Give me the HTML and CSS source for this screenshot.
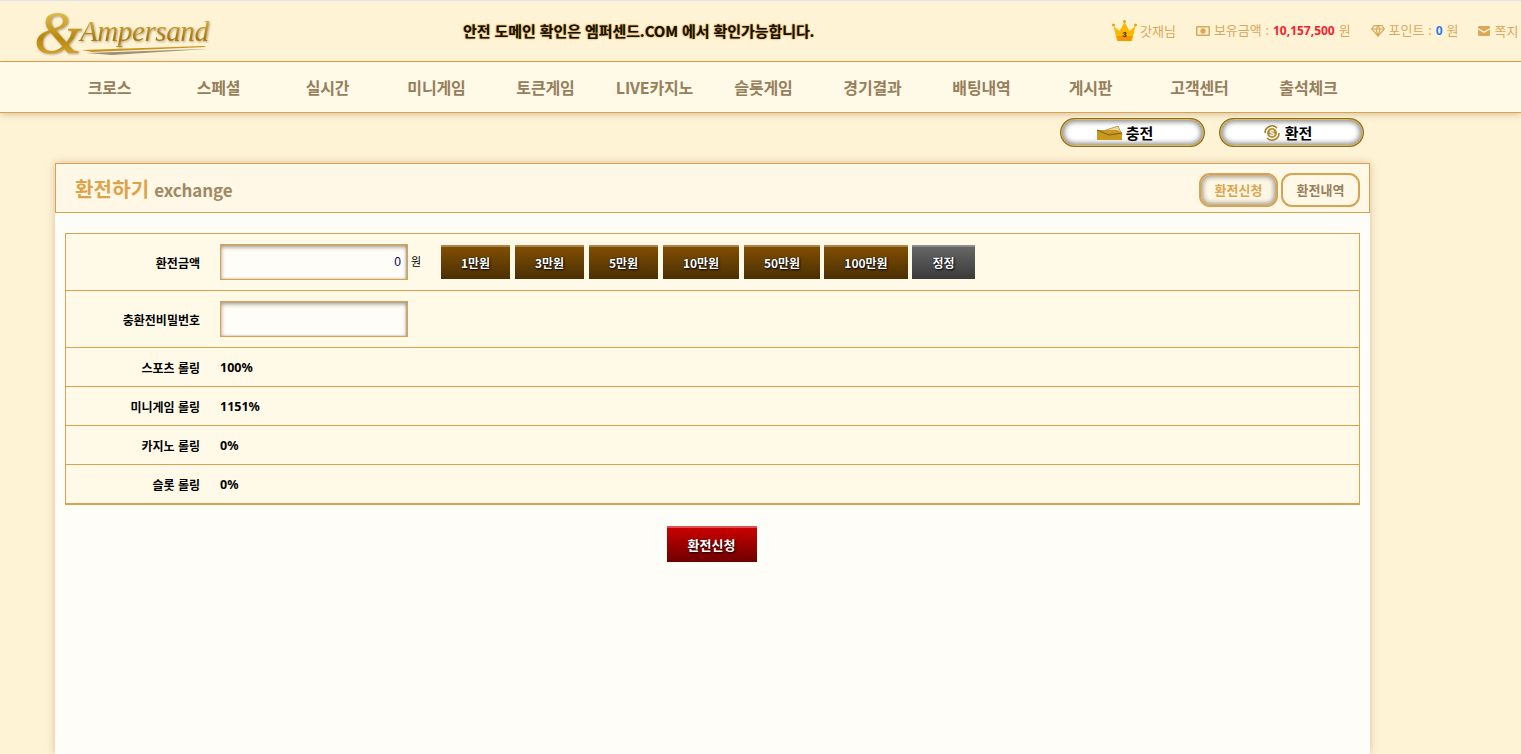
FILE: index.html
```html
<!DOCTYPE html>
<html lang="ko">
<head>
<meta charset="utf-8">
<title>환전하기</title>
<link rel="stylesheet" href="styles.css">
</head>
<body>
<header class="top">
  <a class="logo">
    <span class="logo-amp">&amp;</span><span class="logo-word">Ampersand</span>
    <svg class="logo-swoosh" width="130" height="12" viewBox="0 0 130 12"><path d="M0 4 L122 0 L124 1 L10 6 Z" fill="#c9951f"/><path d="M4 7 L122 3 L125 3 L30 9 Z" fill="#9b9078"/></svg>
  </a>
  <p class="notice">안전 도메인 확인은 엠퍼센드.COM 에서 확인가능합니다.</p>
  <div class="user">
    <span class="user-item user-name">
      <svg class="crown" width="25" height="22" viewBox="0 0 25 22"><path d="M5 21 L1.500 6 L7.500 11 L12.500 2 L17.500 11 L23.500 6 L20 21 Z" fill="#fcb700"/><path d="M5 16h15l-1 5H6z" fill="#f79400"/><circle cx="1.500" cy="5" r="1.500" fill="#e8a50c"/><circle cx="12.500" cy="1.500" r="1.500" fill="#e8a50c"/><circle cx="23.500" cy="5" r="1.500" fill="#e8a50c"/><text x="12.500" y="17" text-anchor="middle" class="crown-num">3</text></svg>
      갓재님
    </span>
    <span class="user-item">
      <svg width="14" height="10" viewBox="0 0 14 10"><path fill-rule="evenodd" d="M1 0h12a1 1 0 0 1 1 1v8a1 1 0 0 1-1 1H1a1 1 0 0 1-1-1V1a1 1 0 0 1 1-1zM1.500 1.500v7h11v-7zM7 2.300a2.700 2.700 0 1 1 0 5.400 2.700 2.700 0 0 1 0-5.400z" fill="#dba858"/></svg>
      <span>보유금액 : <b class="red">10,157,500</b> 원</span>
    </span>
    <span class="user-item">
      <svg width="14" height="12" viewBox="0 0 14 12"><path d="M3 .7h8L13.300 4 7 11.200.7 4zM.7 4h12.600M5 4l2 7 2-7M5 4l2-3.300L9 4" fill="none" stroke="#dba858" stroke-width="1.200"/></svg>
      <span>포인트 : <b class="blue">0</b> 원</span>
    </span>
    <span class="user-item">
      <svg width="12" height="10" viewBox="0 0 12 10"><path d="M0 2V1a1 1 0 0 1 1-1h10a1 1 0 0 1 1 1v1L6 5.500zM0 3.400V9a1 1 0 0 0 1 1h10a1 1 0 0 0 1-1V3.400L6 7z" fill="#dba858"/></svg>
      쪽지
    </span>
  </div>
</header>

<nav class="nav">
  <a>크로스</a><a>스페셜</a><a>실시간</a><a>미니게임</a><a>토큰게임</a><a>LIVE카지노</a><a>슬롯게임</a><a>경기결과</a><a>배팅내역</a><a>게시판</a><a>고객센터</a><a>출석체크</a>
</nav>

<div class="quick">
  <a class="pill pill-charge">
    <svg width="26" height="14" viewBox="0 0 26 14"><path d="M6 5 L21 0 L25 9 L10 13z" fill="#e9d9a0" stroke="#a47c20" stroke-width=".7"/><path d="M0 4h20l5 3v7H0z" fill="#c9981f"/><path d="M0 4l12 5 13-2" fill="none" stroke="#7d5c10"/></svg>
    충전
  </a>
  <a class="pill pill-exch">
    <svg width="16" height="16" viewBox="0 0 16 16"><circle cx="8" cy="8" r="5" fill="#b78d2c"/><text x="8" y="11" text-anchor="middle" class="coin">$</text><path d="M1 8a7 7 0 0 1 12-5M15 8a7 7 0 0 1-12 5" fill="none" stroke="#a47c20" stroke-width="1.500"/></svg>
    환전
  </a>
</div>

<main class="panel">
  <div class="panel-head">
    <h1 class="title">환전하기 <span class="title-sub">exchange</span></h1>
    <div class="tabs">
      <a class="tab tab-on">환전신청</a>
      <a class="tab">환전내역</a>
    </div>
  </div>
  <div class="panel-body">
    <div class="form">
      <div class="row row-input">
        <div class="label">환전금액</div>
        <div class="field">
          <input class="inp inp-num" type="text" value="0">
          <span class="unit">원</span>
          <div class="amounts">
            <button class="amt a1">1만원</button>
            <button class="amt a1">3만원</button>
            <button class="amt a1">5만원</button>
            <button class="amt a2">10만원</button>
            <button class="amt a2">50만원</button>
            <button class="amt a3">100만원</button>
            <button class="amt reset">정정</button>
          </div>
        </div>
      </div>
      <div class="row row-input">
        <div class="label">충환전비밀번호</div>
        <div class="field"><input class="inp" type="password"></div>
      </div>
      <div class="row"><div class="label">스포츠 롤링</div><div class="field val">100%</div></div>
      <div class="row"><div class="label">미니게임 롤링</div><div class="field val">1151%</div></div>
      <div class="row"><div class="label">카지노 롤링</div><div class="field val">0%</div></div>
      <div class="row row-last"><div class="label">슬롯 롤링</div><div class="field val">0%</div></div>
    </div>
    <div class="submit-wrap"><button class="submit">환전신청</button></div>
  </div>
</main>
</body>
</html>
```
FILE: styles.css
```css
* { box-sizing: border-box; }
html, body { height: 100%; }
body {
  margin: 0;
  height: 754px;
  overflow: hidden;
  background: #fff3d6;
  font-family: "Noto Sans CJK KR", "Noto Sans", sans-serif;
  color: #000;
}
a { text-decoration: none; }

.top {
  height: 62px;
  border-top: 1px solid #dfe4ec;
  border-bottom: 1px solid #d8a24e;
  background: #fff3d6;
  display: flex;
  align-items: center;
  position: relative;
}
.logo {
  position: relative;
  width: 176px;
  height: 52px;
  margin-left: 36px;
  display: block;
  flex: none;
}
.logo-amp, .logo-word {
  position: absolute;
  padding: 4px 8px 10px 4px;
  -webkit-background-clip: text;
  background-clip: text;
  color: transparent;
  filter: drop-shadow(1px 1px 1px rgba(110, 90, 50, .55));
}
.logo-amp {
  left: -6px;
  top: -8px;
  font: italic 400 62px/1 "Liberation Serif", serif;
  background-image: linear-gradient(#f7dc6e, #b8860b 55%, #f0c64a);
}
.logo-word {
  left: 40px;
  top: 8px;
  font: italic 400 29px/1 "Liberation Serif", serif;
  letter-spacing: -.4px;
  background-image: linear-gradient(#eac14a, #a87708 60%, #e2b53a);
}
.logo-swoosh { position: absolute; left: 46px; top: 41px; }
.notice {
  margin: 0 0 0 251px;
  width: 360px;
  flex: none;
  font-size: 15px;
  font-weight: 700;
  line-height: 20px;
  letter-spacing: -.09px;
  white-space: nowrap;
  color: #111;
  text-shadow: 0 0 2px #c98f1c, 0 0 1px #c98f1c;
}
.user {
  position: absolute;
  left: 1112px;
  top: 18px;
  display: flex;
  align-items: center;
  gap: 20px;
  white-space: nowrap;
  font-family: "Noto Sans", "Noto Sans CJK KR", sans-serif;
  font-size: 13px;
  line-height: 22px;
  word-spacing: .5px;
  color: #dba858;
}
.user-item { display: flex; align-items: center; gap: 4px; }
.user-item b { font-weight: 700; font-size: 12px; }
.user-name { gap: 3px; }
.red { color: #f5222d; }
.blue { color: #2f7bf0; }
.crown-num { font: 700 8px "Liberation Sans", sans-serif; fill: #3c2c05; }
.coin { font: 700 9px "Liberation Sans", sans-serif; fill: #fff; }

.nav {
  height: 51px;
  padding-left: 55px;
  display: flex;
  align-items: center;
  background: #fff9e8;
  border-bottom: 1px solid #d8a24e;
  box-shadow: 0 2px 6px rgba(150, 120, 70, .35);
  position: relative;
}
.nav a {
  width: 109px;
  text-align: center;
  font-size: 16px;
  font-weight: 700;
  letter-spacing: -.15px;
  color: #96805c;
}

.quick {
  height: 50px;
  padding: 5px 0 0 1060px;
  display: flex;
  align-items: flex-start;
  gap: 14px;
}
.pill {
  width: 145px;
  height: 29px;
  border-radius: 15px;
  display: flex;
  align-items: center;
  justify-content: center;
  gap: 3px;
  border: 2px solid #8d6d26;
  outline: 1px solid #e0bb55;
  outline-offset: -2px;
  background: #fff;
  box-shadow: inset 0 0 5px 2px #8f8f8f;
  font-size: 15px;
  font-weight: 700;
  color: #000;
}
.pill-charge { padding-right: 15px; }
.pill-exch { padding-right: 7px; gap: 5px; }

.panel {
  margin-left: 55px;
  width: 1315px;
  height: 591px;
  background: #fffdf7;
  box-shadow: 0 0 8px rgba(150, 120, 70, .4);
}
.panel-head {
  height: 50px;
  background: #fff8e6;
  border: 1px solid #d8a24e;
  display: flex;
  align-items: center;
  justify-content: space-between;
  padding: 3px 9px 0 19px;
}
.title {
  margin: 0;
  font-size: 20px;
  line-height: 28px;
  font-weight: 700;
  letter-spacing: .2px;
  color: #dba44c;
}
.title-sub { font-size: 17px; color: #a08a63; letter-spacing: -.1px; margin-left: -1px; }
.tabs { display: flex; gap: 3px; }
.tab {
  width: 79px;
  height: 34px;
  border: 2px solid #d8a24e;
  border-radius: 11px;
  display: flex;
  align-items: center;
  justify-content: center;
  font-size: 13px;
  font-weight: 700;
  color: #96805c;
}
.tab-on {
  color: #dba44c;
  box-shadow: inset 0 0 5px 2px #a39a88;
}
.panel-body { padding: 20px 10px 0; }
.form {
  border: 1px solid #d8a24e;
  border-bottom-width: 2px;
  background: #fff9e8;
  font-size: 12px;
  font-weight: 700;
}
.row {
  height: 39px;
  display: flex;
  align-items: center;
  border-bottom: 1px solid #d8a24e;
}
.row-input { height: 57px; }
.row-last { border-bottom: 0; height: 38px; }
.label {
  width: 134px;
  text-align: right;
  flex: none;
}
.field {
  margin-left: 20px;
  display: flex;
  align-items: center;
}
.val { font-family: "Noto Sans", sans-serif; font-size: 12.500px; }
.inp {
  width: 188px;
  height: 36px;
  border: 1px solid #d8a24e;
  background: #fffdf7;
  box-shadow: inset 0 2px 4px #9c9586, inset -1px 0 2px #b5ae9f;
  padding: 0 6px;
  font: 12px "Liberation Sans", sans-serif;
  color: #00006b;
  outline: 0;
}
.inp-num { text-align: right; }
.unit { margin-left: 3px; margin-top: -3px; width: 30px; font-weight: 400; font-size: 11px; }
.amounts { display: flex; gap: 5px; }
.amt {
  height: 34px;
  border: 0;
  padding: 0 0 2px;
  border-top: 2px solid #a9844f;
  background: linear-gradient(#804e00, #4a2f04);
  color: #fff;
  font: 700 12px "Noto Sans CJK KR", sans-serif;
  text-shadow: 1px 1px 2px #000, 0 0 1px #000;
}
.a1 { width: 69px; }
.a2 { width: 76px; }
.a3 { width: 84px; margin-left: -1px; }
.reset {
  width: 63px;
  margin-left: -1px;
  border-top-color: #8c8c8c;
  background: linear-gradient(#666, #3a3a3a);
}
.submit-wrap { display: flex; justify-content: center; padding: 21px 2px 0 0; }
.submit {
  width: 90px;
  height: 36px;
  border: 0;
  padding: 0 0 2px;
  border-top: 2px solid #e05050;
  background: linear-gradient(#c90000, #6e0000);
  color: #fff;
  font: 700 13px "Noto Sans CJK KR", sans-serif;
  text-shadow: 1px 1px 2px #000;
}
```
